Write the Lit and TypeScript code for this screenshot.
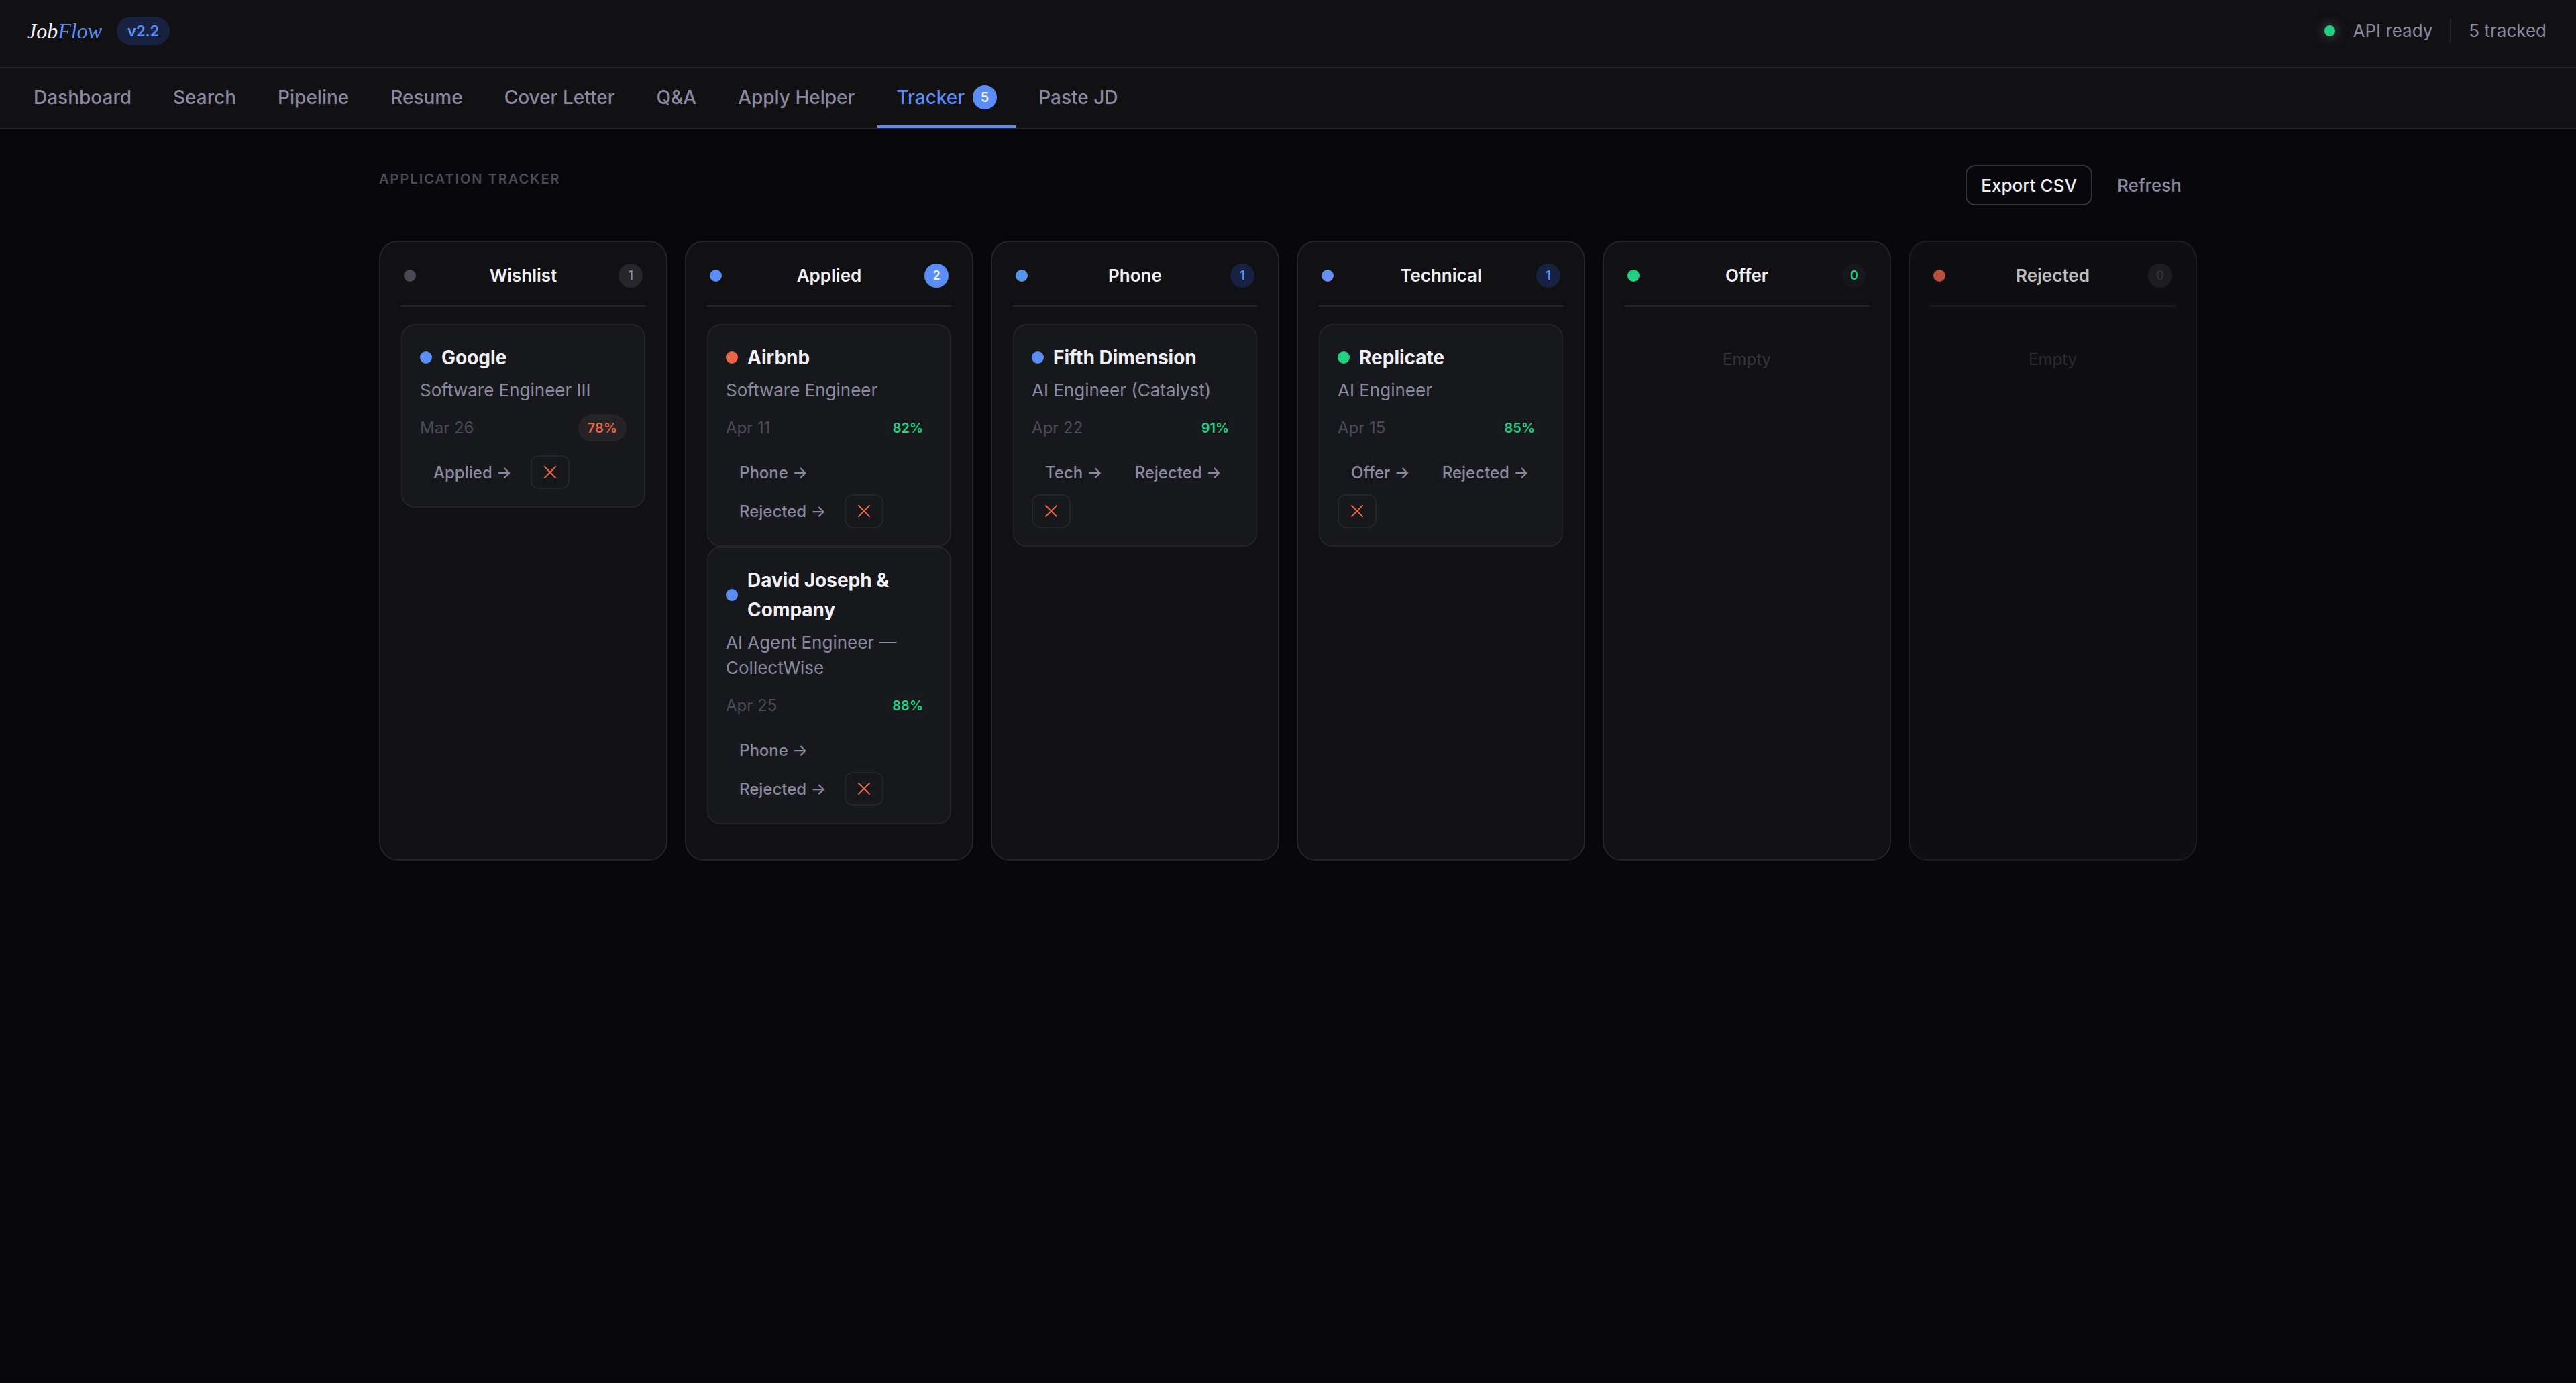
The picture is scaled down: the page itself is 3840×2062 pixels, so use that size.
import { LitElement, html, css, svg, nothing } from "lit";
import { customElement, property, state } from "lit/decorators.js";
import { classMap } from "lit/directives/class-map.js";

interface Job {
  company: string;
  role: string;
  date: string;
  score: number;
  tone: string;
  moves: string[];
}

interface Column {
  title: string;
  tone: string;
  badge: string;
  faded?: boolean;
  jobs: Job[];
}

const TABS = ["Dashboard", "Search", "Pipeline", "Resume", "Cover Letter", "Q&A", "Apply Helper", "Tracker", "Paste JD"];

const COLUMNS: Column[] = [
  {
    title: "Wishlist", tone: "grey", badge: "neutral",
    jobs: [{ company: "Google", role: "Software Engineer III", date: "Mar 26", score: 78, tone: "blue", moves: ["Applied"] }],
  },
  {
    title: "Applied", tone: "blue", badge: "solid",
    jobs: [
      { company: "Airbnb", role: "Software Engineer", date: "Apr 11", score: 82, tone: "red", moves: ["Phone", "Rejected"] },
      { company: "David Joseph & Company", role: "AI Agent Engineer — CollectWise", date: "Apr 25", score: 88, tone: "blue", moves: ["Phone", "Rejected"] },
    ],
  },
  {
    title: "Phone", tone: "sky", badge: "tint",
    jobs: [{ company: "Fifth Dimension", role: "AI Engineer (Catalyst)", date: "Apr 22", score: 91, tone: "blue", moves: ["Tech", "Rejected"] }],
  },
  {
    title: "Technical", tone: "indigo", badge: "tint",
    jobs: [{ company: "Replicate", role: "AI Engineer", date: "Apr 15", score: 85, tone: "green", moves: ["Offer", "Rejected"] }],
  },
  { title: "Offer", tone: "green", badge: "success", jobs: [] },
  { title: "Rejected", tone: "red", badge: "muted", faded: true, jobs: [] },
];

const shared = css`
  *, *::before, *::after { box-sizing: border-box; }
  h1, h2, h3, p { margin: 0; font: inherit; }
  button { font: inherit; color: inherit; background: none; border: 0; margin: 0; padding: 0; cursor: pointer; }
  .dot { flex: none; width: 18px; height: 18px; border-radius: 50%; }
  .grey { background: #4a4a57; }
  .blue { background: #5b8df6; }
  .sky { background: #5496e6; }
  .indigo { background: #668ff0; }
  .green { background: #22d084; }
  .red { background: #e8654a; }
`;

@customElement("job-card")
export class JobCard extends LitElement {
  static styles = [shared, css`
    :host { display: block; }
    .card {
      padding: 26px;
      border: 2px solid #242427;
      border-radius: 20px;
      background: #17181b;
    }
    .head { display: flex; align-items: center; gap: 14px; }
    .company { font-size: 28px; line-height: 44px; font-weight: 700; color: #f1f0f6; }
    .role { margin-top: 8px; font-size: 26px; line-height: 38px; color: #8a89a1; }
    .meta { display: flex; align-items: center; justify-content: space-between; margin-top: 17px; }
    .date { font-size: 24px; line-height: 40px; color: #4b4b58; }
    .score {
      padding: 0 14px;
      border-radius: 20px;
      font-size: 20px;
      line-height: 40px;
      font-weight: 600;
    }
    .high { color: #22d084; background: #17191c; }
    .mid { color: #e8654a; background: #262326; }
    .actions { display: flex; flex-wrap: wrap; gap: 8px; margin-top: 21px; }
    .move {
      height: 50px;
      padding: 0 20px;
      border-radius: 12px;
      font-size: 24px;
      font-weight: 500;
      color: #8a89a1;
    }
    .remove {
      display: flex;
      align-items: center;
      justify-content: center;
      width: 58px;
      height: 50px;
      border: 2px solid #242427;
      border-radius: 12px;
      color: #e8654a;
    }
  `];

  @property({ attribute: false }) job!: Job;

  render() {
    const j = this.job;
    return html`
      <article class="card">
        <div class="head">
          <span class="dot ${j.tone}"></span>
          <h3 class="company">${j.company}</h3>
        </div>
        <p class="role">${j.role}</p>
        <div class="meta">
          <span class="date">${j.date}</span>
          <span class=${classMap({ score: true, high: j.score >= 80, mid: j.score < 80 })}>${j.score}%</span>
        </div>
        <div class="actions">
          ${j.moves.map((m) => html`<button class="move" type="button">${m} →</button>`)}
          <button class="remove" type="button" aria-label="Remove">
            <svg width="18" height="18" viewBox="0 0 18 18" fill="none" stroke="currentColor" stroke-width="2" stroke-linecap="round" aria-hidden="true">
              ${svg`<path d="M1 1l16 16M17 1L1 17"></path>`}
            </svg>
          </button>
        </div>
      </article>
    `;
  }
}

@customElement("board-column")
export class BoardColumn extends LitElement {
  static styles = [shared, css`
    :host { display: flex; min-width: 0; }
    .column {
      flex: 1;
      min-width: 0;
      padding: 20px 31px 52px;
      border: 2px solid #242427;
      border-radius: 28px;
      background: #111113;
    }
    .faded { opacity: 0.78; }
    .head {
      display: grid;
      grid-template-columns: 36px 1fr 36px;
      align-items: center;
      height: 76px;
      margin-bottom: 26px;
      padding: 12px 4px 26px;
      border-bottom: 2px solid #242427;
    }
    .title { font-size: 26px; line-height: 36px; font-weight: 600; text-align: center; color: #f1f0f6; }
    .count {
      height: 36px;
      border-radius: 18px;
      font-size: 18px;
      line-height: 36px;
      font-weight: 600;
      text-align: center;
    }
    .neutral { color: #8a89a1; background: #26262b; }
    .solid { color: #f1f0f6; background: #5b8df6; }
    .tint { color: #5b8df6; background: #172142; }
    .success { color: #22d084; background: #15171a; }
    .muted { color: #3d3d48; background: #242427; }
    .empty { padding: 34px 0; font-size: 24px; line-height: 38px; text-align: center; color: #35353e; }
  `];

  @property({ attribute: false }) column!: Column;

  render() {
    const c = this.column;
    return html`
      <section class=${classMap({ column: true, faded: !!c.faded })}>
        <header class="head">
          <span class="dot ${c.tone}"></span>
          <h2 class="title">${c.title}</h2>
          <span class="count ${c.badge}">${c.jobs.length}</span>
        </header>
        ${c.jobs.length
          ? c.jobs.map((j) => html`<job-card .job=${j}></job-card>`)
          : html`<p class="empty">Empty</p>`}
      </section>
    `;
  }
}

@customElement("app-root")
export class AppRoot extends LitElement {
  static styles = [shared, css`
    :host {
      display: block;
      min-height: 100vh;
      background: #08080c;
      color: #f1f0f6;
      font-family: Inter, "Liberation Sans", sans-serif;
    }
    .topbar {
      display: flex;
      align-items: center;
      justify-content: space-between;
      height: 102px;
      padding: 0 44px 8px 40px;
      border-bottom: 2px solid #242427;
      background: #111113;
    }
    .brand { display: flex; align-items: center; gap: 22px; }
    .logo { font-family: "Liberation Serif", serif; font-style: italic; font-size: 32px; line-height: 44px; }
    .flow { color: #5b8df6; }
    .version {
      padding: 0 16px;
      border-radius: 21px;
      background: #172142;
      color: #5b8df6;
      font-size: 22px;
      line-height: 42px;
      font-weight: 600;
    }
    .status { display: flex; align-items: center; gap: 26px; font-size: 26px; line-height: 36px; color: #8a89a1; }
    .live { width: 16px; height: 16px; border-radius: 50%; background: #22d084; box-shadow: 0 0 16px 2px #44444c; }
    .rule { width: 2px; height: 36px; background: #242427; }
    .tabs {
      display: flex;
      gap: 6px;
      height: 91px;
      padding: 0 22px;
      border-bottom: 2px solid #242427;
      background: #111113;
    }
    .tab {
      display: flex;
      align-items: center;
      gap: 12px;
      padding: 0 28px;
      border-bottom: 4px solid transparent;
      color: #8a89a1;
      font-size: 28px;
      font-weight: 500;
      white-space: nowrap;
      text-decoration: none;
    }
    .active { color: #5b8df6; border-bottom-color: #5b8df6; }
    .pip {
      width: 36px;
      height: 36px;
      border-radius: 50%;
      background: #5b8df6;
      color: #f1f0f6;
      font-size: 20px;
      line-height: 36px;
      font-weight: 600;
      text-align: center;
    }
    .main { max-width: 2800px; margin: 0 auto; padding: 53px 45px; }
    .toolbar { display: flex; align-items: flex-start; justify-content: space-between; margin-bottom: 53px; }
    .heading { font-size: 20px; line-height: 42px; font-weight: 600; letter-spacing: 2px; text-transform: uppercase; color: #4b4b58; }
    .buttons { display: flex; gap: 14px; }
    .button {
      height: 60px;
      padding: 0 21px;
      border: 2px solid transparent;
      border-radius: 14px;
      color: #8a89a1;
      font-size: 26px;
      font-weight: 500;
    }
    .outlined { border-color: #33353b; color: #f1f0f6; }
    .board { display: grid; grid-template-columns: repeat(6, minmax(0, 1fr)); gap: 26px; }
  `];

  @state() private tab = "Tracker";

  private select(e: Event, name: string) {
    e.preventDefault();
    this.tab = name;
  }

  render() {
    const total = COLUMNS.reduce((n, c) => n + c.jobs.length, 0);
    return html`
      <header class="topbar">
        <div class="brand">
          <h1 class="logo">Job<span class="flow">Flow</span></h1>
          <span class="version">v2.2</span>
        </div>
        <div class="status">
          <span class="live"></span>
          <span>API ready</span>
          <span class="rule"></span>
          <span>${total} tracked</span>
        </div>
      </header>
      <nav class="tabs">
        ${TABS.map((t) => html`
          <a class=${classMap({ tab: true, active: t === this.tab })} href="#" @click=${(e: Event) => this.select(e, t)}>
            ${t}${t === "Tracker" ? html`<span class="pip">${total}</span>` : nothing}
          </a>
        `)}
      </nav>
      <main class="main">
        <div class="toolbar">
          <h2 class="heading">Application Tracker</h2>
          <div class="buttons">
            <button class="button outlined" type="button">Export CSV</button>
            <button class="button" type="button">Refresh</button>
          </div>
        </div>
        <div class="board">
          ${COLUMNS.map((c) => html`<board-column .column=${c}></board-column>`)}
        </div>
      </main>
    `;
  }
}
